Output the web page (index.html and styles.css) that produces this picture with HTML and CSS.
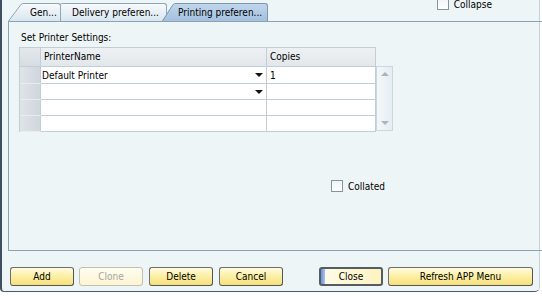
FILE: index.html
```html
<!DOCTYPE html>
<html>
<head>
<meta charset="utf-8">
<link rel="stylesheet" href="styles.css">
</head>
<body>
<div class="window">
  <div class="topbar">
    <div class="tabs">
      <div class="tab tab-gen">
        <svg class="slant" width="16" height="18" viewBox="0 0 16 18"><defs><linearGradient id="g1" x1="0" y1="0" x2="0" y2="1"><stop offset="0" stop-color="#f7fafc"/><stop offset="1" stop-color="#d9e6ef"/></linearGradient></defs><path d="M0 18 L13 1.5 Q14 0.5 16 0.5 L16 18 Z" fill="url(#g1)"/><path d="M0.5 18 L13 1.5 Q14 0.5 16 0.5" fill="none" stroke="#8fa6b6"/></svg>
        <div class="tab-body">Gen...</div>
      </div>
      <div class="tab tab-del">
        <svg class="slant" width="16" height="18" viewBox="0 0 16 18"><defs><linearGradient id="g2" x1="0" y1="0" x2="0" y2="1"><stop offset="0" stop-color="#f7fafc"/><stop offset="1" stop-color="#d9e6ef"/></linearGradient></defs><path d="M0 18 L13 1.5 Q14 0.5 16 0.5 L16 18 Z" fill="url(#g2)"/><path d="M0.5 18 L13 1.5 Q14 0.5 16 0.5" fill="none" stroke="#8fa6b6"/></svg>
        <div class="tab-body">Delivery preferen...</div>
      </div>
      <div class="tab tab-print">
        <svg class="slant" width="14" height="18" viewBox="0 0 14 18"><defs><linearGradient id="g3" x1="0" y1="0" x2="0" y2="1"><stop offset="0" stop-color="#c0d6ec"/><stop offset="1" stop-color="#a3c0de"/></linearGradient></defs><path d="M0 18 L11 1.5 Q12 0.5 14 0.5 L14 18 Z" fill="url(#g3)"/><path d="M0.5 18 L11 1.5 Q12 0.5 14 0.5" fill="none" stroke="#7f98ae"/></svg>
        <div class="tab-body">Printing preferen...</div>
      </div>
    </div>
    <div class="check collapse"><span class="box"></span><span>Collapse</span></div>
  </div>

  <div class="panel">
    <div class="caption">Set Printer Settings:</div>
    <div class="grid-wrap">
      <div class="grid">
        <div class="cell rh hdr"></div>
        <div class="cell hdr">PrinterName</div>
        <div class="cell hdr">Copies</div>

        <div class="cell rh r1"></div>
        <div class="cell r1 combo"><span>Default Printer</span><span class="arrow"></span></div>
        <div class="cell r1">1</div>

        <div class="cell rh"></div>
        <div class="cell combo"><span></span><span class="arrow"></span></div>
        <div class="cell"></div>

        <div class="cell rh"></div>
        <div class="cell"></div>
        <div class="cell"></div>

        <div class="cell rh"></div>
        <div class="cell"></div>
        <div class="cell"></div>
      </div>
      <div class="vscroll">
        <span class="sarrow up"></span>
        <span class="sarrow down"></span>
      </div>
    </div>
    <div class="check collated"><span class="box"></span><span>Collated</span></div>
  </div>

  <div class="buttons">
    <div class="btn">Add</div>
    <div class="btn disabled b-clone">Clone</div>
    <div class="btn b-delete">Delete</div>
    <div class="btn b-cancel">Cancel</div>
    <div class="btn default b-close">Close</div>
    <div class="btn b-refresh">Refresh APP Menu</div>
  </div>
</div>
</body>
</html>
```

FILE: styles.css
```css
html, body {
  margin: 0;
  padding: 0;
  background: #ffffff;
}

body {
  font-family: "DejaVu Sans", sans-serif;
  font-stretch: condensed;
  font-size: 10px;
  color: #000;
}

.window {
  width: 537px;
  height: 291px;
  background: #eef5f6;
  border-left: 2px solid #3e4f62;
  border-bottom: 1px solid #4a5868;
  border-right: 1px solid #c6d2da;
  border-bottom-left-radius: 4px;
  border-bottom-right-radius: 5px;
  display: flex;
  flex-direction: column;
}

.topbar {
  height: 21px;
  display: flex;
  align-items: flex-end;
  padding-left: 6px;
}

.tabs {
  display: flex;
  height: 18px;
}

.tab {
  display: flex;
  height: 18px;
  position: relative;
}

.slant {
  display: block;
  flex: none;
}

.tab-body {
  height: 17px;
  line-height: 18px;
  border-top: 1px solid #8fa6b6;
  border-right: 1px solid #8fa6b6;
  border-top-right-radius: 3px;
  background: linear-gradient(#f7fafc, #d9e6ef);
  white-space: nowrap;
  box-sizing: content-box;
}

.tab-gen { z-index: 2; }
.tab-gen .tab-body { width: 30px; padding-left: 6px; }

.tab-del { z-index: 1; margin-left: -14px; }
.tab-del .tab-body { width: 94px; padding-left: 9px; }

.tab-print { z-index: 3; margin-left: -5px; }
.tab-print .tab-body {
  width: 89px;
  padding-left: 2px;
  background: linear-gradient(#c0d6ec, #a3c0de);
  border-color: #7f98ae;
}

.check {
  display: flex;
  align-items: center;
  gap: 5px;
}

.box {
  width: 10px;
  height: 10px;
  border: 1px solid #8594a0;
  background: linear-gradient(#f0f3f5, #ffffff);
  display: block;
}

.collapse {
  align-self: flex-start;
  margin-top: -2px;
  margin-left: auto;
  margin-right: 47px;
}

.panel {
  margin-left: 6px;
  width: 523px;
  height: 228px;
  border: 1px solid #8ba3b5;
  display: flex;
  flex-direction: column;
  padding-left: 10px;
  box-sizing: content-box;
}

.caption {
  padding-left: 2px;
  margin-top: 10px;
  height: 15px;
  line-height: 12px;
}

.grid-wrap {
  display: flex;
  align-items: flex-start;
}

.grid {
  display: grid;
  grid-template-columns: 21px 226px 109px;
  grid-template-rows: 19px 17px 16px 16px 16px;
  border-top: 1px solid #c3cdd5;
  border-left: 1px solid #c3cdd5;
  background: #ffffff;
}

.cell {
  box-sizing: border-box;
  border-right: 1px solid #c3cdd5;
  border-bottom: 1px solid #c3cdd5;
  padding-left: 3px;
  line-height: 15px;
  white-space: nowrap;
  overflow: hidden;
}

.cell.hdr {
  background: linear-gradient(#eef1f3, #e2e7eb);
  line-height: 17px;
}

.cell.rh {
  background: linear-gradient(90deg, #dfe4e8, #cfd6dc);
  border-bottom-color: #e9edf0;
  padding: 0;
}

.cell.rh.hdr {
  background: linear-gradient(#e3e8ec, #d6dde2);
  border-bottom-color: #c3cdd5;
}

.cell.r1 { line-height: 17px; }

.combo {
  display: flex;
  justify-content: space-between;
  align-items: center;
  padding-left: 1px;
  padding-right: 3px;
}

.arrow {
  width: 0;
  height: 0;
  border-left: 4px solid transparent;
  border-right: 4px solid transparent;
  border-top: 4px solid #111;
}

.vscroll {
  margin-top: 19px;
  margin-left: 0;
  width: 17px;
  height: 65px;
  border: 1px solid #c8d7e0;
  background: linear-gradient(90deg, #f3f7f9, #e6eef2);
  display: flex;
  flex-direction: column;
  justify-content: space-between;
  align-items: center;
  padding: 5px 0;
  box-sizing: border-box;
}

.sarrow {
  width: 0;
  height: 0;
  border-left: 4px solid transparent;
  border-right: 4px solid transparent;
}

.sarrow.up { border-bottom: 4px solid #a9b4bc; }
.sarrow.down { border-top: 4px solid #a9b4bc; }

.collated {
  margin-top: 48px;
  margin-left: 312px;
}

.buttons {
  display: flex;
  padding-left: 8px;
  margin-top: 16px;
}

.btn {
  width: 64px;
  height: 19px;
  box-sizing: border-box;
  border: 1px solid #6f6f6f;
  border-right-color: #555;
  border-bottom-color: #555;
  border-radius: 3px;
  background: linear-gradient(#fffbe0, #fcf0a8 45%, #f6e07a);
  text-align: center;
  line-height: 17px;
}

.btn.disabled {
  border-color: #c2c0b0;
  background: linear-gradient(#fffdf0, #fcf5d2);
  color: #a4a4a4;
}

.b-clone { margin-left: 5px; }
.b-delete { margin-left: 6px; }
.b-cancel { margin-left: 6px; }
.b-close {
  margin-left: 36px;
  border: 2px solid #555c62;
  background: linear-gradient(90deg, #6b96dc 0, #a8c2ec 4px, #fffbe6 4px, #fdf3c0);
  line-height: 15px;
}
.b-refresh {
  margin-left: 5px;
  width: 145px;
}
```
